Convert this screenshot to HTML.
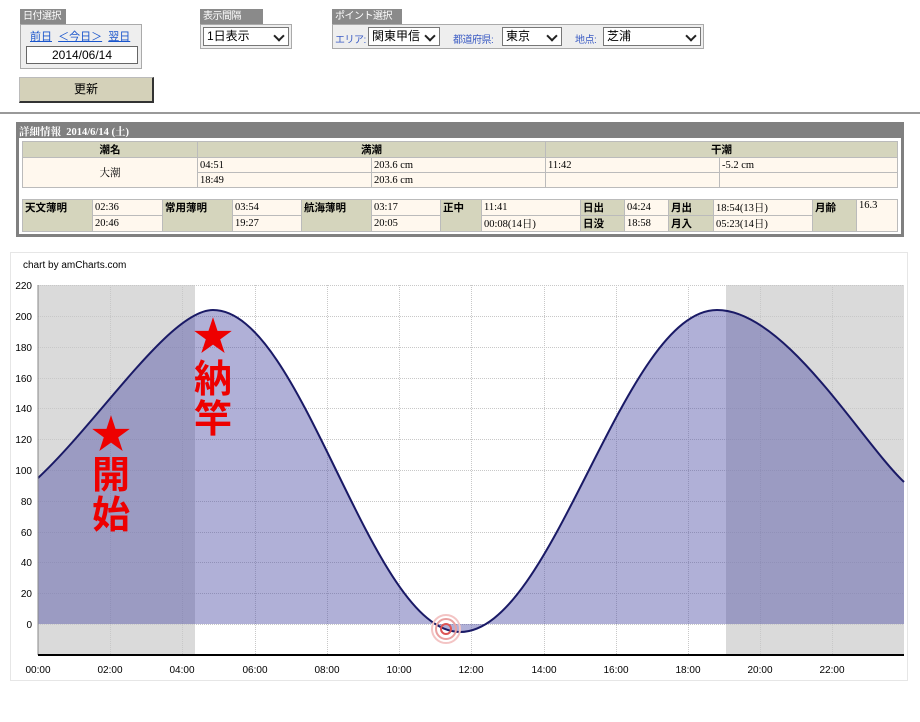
<!DOCTYPE html>
<html><head><meta charset="utf-8">
<style>
*{margin:0;padding:0;box-sizing:border-box}
body{width:920px;height:722px;background:#fff;position:relative;overflow:hidden;font-family:"Liberation Sans","Noto Sans CJK JP",sans-serif;font-size:11px;color:#000}
.a{position:absolute}
.tab{position:absolute;background:#8a8a8a;color:#fff;font-size:10px;line-height:15px;padding:0 3px;height:15px;letter-spacing:-0.5px}
.box{position:absolute;background:#eee;border:1px solid #aaa}
.sel{position:absolute;background:#fff;border:1px solid #777;font-size:12px;line-height:17px;padding-left:3px;height:19px}
.sel:after{content:"";position:absolute;right:5px;top:4px;width:6px;height:6px;border-right:2px solid #222;border-bottom:2px solid #222;transform:rotate(45deg)}
.lnk{color:#1a55cc;text-decoration:underline;font-size:11px}
.blue{color:#3a5bc4;font-size:10px;letter-spacing:-0.5px}
table{border-collapse:collapse;font-family:"Liberation Serif","Noto Serif CJK SC",serif;font-size:10.5px}
td{border:1px solid #bbb;height:15px;padding:0 2px;background:#fff8ee;vertical-align:middle}
td.h{background:#d5d5bd;font-weight:bold;font-family:"Liberation Sans","Noto Sans CJK JP",sans-serif;font-size:10.5px}
</style></head><body>
<div class="tab" style="left:20px;top:9px;width:46px">日付選択</div>
<div class="box" style="left:20px;top:24px;width:122px;height:45px">
 <div class="a" style="left:9px;top:3px"><span class="lnk">前日</span>&nbsp;&nbsp;<span class="lnk">＜今日＞</span>&nbsp;&nbsp;<span class="lnk">翌日</span></div>
 <div class="a" style="left:5px;top:21px;width:112px;height:18px;background:#fff;border:1px solid #666;text-align:center;font-size:12px;line-height:16px">2014/06/14</div>
</div>
<div class="a" style="left:19px;top:77px;width:135px;height:26px;background:#d4d1b9;border:1px solid #bbb;border-right:2px solid #333;border-bottom:2px solid #333;text-align:center;line-height:23px;font-size:12px">更新</div>

<div class="tab" style="left:200px;top:9px;width:63px">表示間隔</div>
<div class="box" style="left:200px;top:24px;width:92px;height:25px">
 <div class="sel" style="left:2px;top:2px;width:86px">1日表示</div>
</div>

<div class="tab" style="left:332px;top:9px;width:70px">ポイント選択</div>
<div class="box" style="left:332px;top:24px;width:372px;height:25px">
 <span class="a blue" style="left:2px;top:6px">エリア:</span>
 <div class="sel" style="left:35px;top:2px;width:72px">関東甲信</div>
 <span class="a blue" style="left:120px;top:6px">都道府県:</span>
 <div class="sel" style="left:169px;top:2px;width:60px">東京</div>
 <span class="a blue" style="left:242px;top:6px">地点:</span>
 <div class="sel" style="left:270px;top:2px;width:98px">芝浦</div>
</div>

<div class="a" style="left:0;top:112px;width:920px;height:2px;background:#999"></div>

<div class="a" style="left:16px;top:122px;width:888px;height:115px;background:#808080">
 <div class="a" style="left:3px;top:2px;color:#fff;font-weight:bold;font-size:10.5px;font-family:'Liberation Serif','Noto Serif CJK SC',serif">詳細情報&nbsp; 2014/6/14 (土)</div>
 <div class="a" style="left:3px;top:16px;width:882px;height:96px;background:#fff">
  <table class="a" style="left:3px;top:3px;width:876px">
   <tr><td class="h" style="width:175px;text-align:center">潮名</td><td class="h" colspan="2" style="text-align:center">満潮</td><td class="h" colspan="2" style="text-align:center">干潮</td></tr>
   <tr><td rowspan="2" style="text-align:center">大潮</td><td style="width:174px">04:51</td><td style="width:174px">203.6 cm</td><td style="width:174px">11:42</td><td>-5.2 cm</td></tr>
   <tr><td>18:49</td><td>203.6 cm</td><td></td><td></td></tr>
  </table>
  <table class="a" style="left:3px;top:61px;width:876px">
   <tr><td class="h" rowspan="2" style="width:70px;vertical-align:top">天文薄明</td><td style="width:70px">02:36</td><td class="h" rowspan="2" style="width:70px;vertical-align:top">常用薄明</td><td style="width:69px">03:54</td><td class="h" rowspan="2" style="width:70px;vertical-align:top">航海薄明</td><td style="width:69px">03:17</td><td class="h" rowspan="2" style="width:41px;vertical-align:top">正中</td><td style="width:99px">11:41</td><td class="h" style="width:44px">日出</td><td style="width:44px">04:24</td><td class="h" style="width:45px">月出</td><td style="width:99px">18:54(13日)</td><td class="h" rowspan="2" style="width:44px;vertical-align:top">月齢</td><td rowspan="2" style="vertical-align:top">16.3</td></tr>
   <tr><td>20:46</td><td>19:27</td><td>20:05</td><td>00:08(14日)</td><td class="h">日没</td><td>18:58</td><td class="h">月入</td><td>05:23(14日)</td></tr>
  </table>
 </div>
</div>

<svg class="a" style="left:0;top:0" width="920" height="722">
 <rect x="10.5" y="252.5" width="897" height="428" fill="none" stroke="#e6e6e6"/>
 <text x="23" y="268" font-size="10" font-family="Liberation Sans" fill="#000">chart by amCharts.com</text>
 <rect x="38" y="285" width="157" height="370" fill="#dadada"/>
 <rect x="726" y="285" width="178" height="370" fill="#dadada"/>
 <g stroke="#c8c8c8" stroke-dasharray="1,1" stroke-width="1">
  <line x1="38" x2="904" y1="285.5" y2="285.5"/><line x1="38" x2="904" y1="316.5" y2="316.5"/><line x1="38" x2="904" y1="347.5" y2="347.5"/><line x1="38" x2="904" y1="378.5" y2="378.5"/><line x1="38" x2="904" y1="408.5" y2="408.5"/><line x1="38" x2="904" y1="439.5" y2="439.5"/><line x1="38" x2="904" y1="470.5" y2="470.5"/><line x1="38" x2="904" y1="501.5" y2="501.5"/><line x1="38" x2="904" y1="532.5" y2="532.5"/><line x1="38" x2="904" y1="562.5" y2="562.5"/><line x1="38" x2="904" y1="593.5" y2="593.5"/><line x1="38" x2="904" y1="624.5" y2="624.5"/>
  <line y1="285" y2="655" x1="110.5" x2="110.5"/><line y1="285" y2="655" x1="182.5" x2="182.5"/><line y1="285" y2="655" x1="255.5" x2="255.5"/><line y1="285" y2="655" x1="327.5" x2="327.5"/><line y1="285" y2="655" x1="399.5" x2="399.5"/><line y1="285" y2="655" x1="471.5" x2="471.5"/><line y1="285" y2="655" x1="544.5" x2="544.5"/><line y1="285" y2="655" x1="616.5" x2="616.5"/><line y1="285" y2="655" x1="688.5" x2="688.5"/><line y1="285" y2="655" x1="760.5" x2="760.5"/><line y1="285" y2="655" x1="832.5" x2="832.5"/>
 </g>
 <path d="M38 478 C100 420 170 310 213 310 C303 310 370 632 460 632 C554 632 623 310 717 310 C785 310 860 440 904 482 L904 624 L38 624 Z" fill="rgba(75,75,165,0.44)"/>
 <path d="M38 478 C100 420 170 310 213 310 C303 310 370 632 460 632 C554 632 623 310 717 310 C785 310 860 440 904 482" fill="none" stroke="#1a1a66" stroke-width="2"/>
 <line x1="38" x2="38" y1="285" y2="655" stroke="#888"/>
 <line x1="38" x2="904" y1="655" y2="655" stroke="#000" stroke-width="2"/>
 <g font-size="10" font-family="Liberation Sans" fill="#000" text-anchor="end">
  <text x="32" y="289">220</text><text x="32" y="320">200</text><text x="32" y="351">180</text><text x="32" y="382">160</text><text x="32" y="412">140</text><text x="32" y="443">120</text><text x="32" y="474">100</text><text x="32" y="505">80</text><text x="32" y="536">60</text><text x="32" y="566">40</text><text x="32" y="597">20</text><text x="32" y="628">0</text>
 </g>
 <g font-size="10" font-family="Liberation Sans" fill="#000" text-anchor="middle">
  <text x="38" y="673">00:00</text><text x="110" y="673">02:00</text><text x="182" y="673">04:00</text><text x="255" y="673">06:00</text><text x="327" y="673">08:00</text><text x="399" y="673">10:00</text><text x="471" y="673">12:00</text><text x="544" y="673">14:00</text><text x="616" y="673">16:00</text><text x="688" y="673">18:00</text><text x="760" y="673">20:00</text><text x="832" y="673">22:00</text>
 </g>
 <circle cx="446" cy="629" r="14" fill="none" stroke="#f3c4c4" stroke-width="2"/>
 <circle cx="446" cy="629" r="10" fill="none" stroke="#e9a0a0" stroke-width="2"/>
 <circle cx="446" cy="629" r="5" fill="none" stroke="#d55" stroke-width="2"/>
 <g fill="#ee0000" font-weight="bold" text-anchor="middle" font-family="'Noto Sans CJK JP',sans-serif">
  <text x="111" y="448" font-size="40">★</text>
  <text x="111" y="488" font-size="38">開</text>
  <text x="111" y="528" font-size="38">始</text>
  <text x="213" y="350" font-size="40">★</text>
  <text x="213" y="392" font-size="38">納</text>
  <text x="213" y="432" font-size="38">竿</text>
 </g>
</svg>
</body></html>
